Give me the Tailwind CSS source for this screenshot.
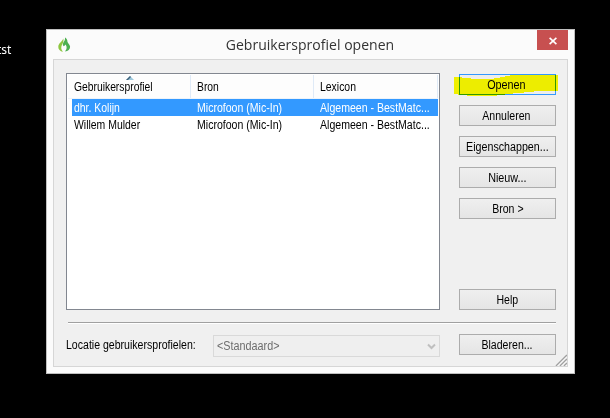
<!DOCTYPE html>
<html lang="nl">
<head>
<meta charset="utf-8">
<title>Gebruikersprofiel openen</title>
<script src="https://cdn.jsdelivr.net/npm/@tailwindcss/browser@4"></script>
</head>
<body class="w-[610px] h-[418px] bg-black overflow-hidden relative text-[12px] leading-[17px] text-black font-['Liberation_Sans',Arial,sans-serif]">
<span class="absolute left-[-3px] top-[41px] text-white text-[12px] font-['Noto_Sans',sans-serif]">tst</span>
<main class="absolute left-[46px] top-[29px] w-[529px] h-[345px] border border-[#bfbfbf] bg-[#fbfbfb] px-[6px] pb-[6px] flex flex-col">
  <header class="h-[29px] shrink-0 flex relative justify-center">
    <svg class="absolute left-[5px] top-[7px]" width="13" height="16" viewBox="0 0 13 16">
      <path d="M5.300 1.500C4.500 4.500.3 6 .3 10c0 2.400 1.700 4.200 4.700 4.800C3.200 12.800 2.800 10.800 3.700 8.600 4.600 6.500 6.100 4.500 5.300 1.500Z" fill="#8dc63f"/>
      <path d="M7 .6C7.600 3.800 4.900 5.200 4.900 7.600c0 .7.300 1.200.8 1.600.8-.2 1.500-.8 1.900-1.700 1.500 2.200 1.500 4.800-.7 7 3.300-.3 5.200-2.200 5.200-4.700C12.100 7 9.200 6.300 9.300 3.400 8.900 2.300 8.200 1.300 7 .6Z" fill="#4caf50"/>
    </svg>
    <h1 class="text-[15px] leading-[29px] text-[#333] whitespace-nowrap font-['Open_Sans','Noto_Sans',sans-serif] relative left-[-1px] scale-x-[.936]">Gebruikersprofiel openen</h1>
    <button class="absolute right-0 top-0 w-[31px] h-[20px] bg-[#c75050] grid place-items-center" aria-label="Sluiten">
      <svg class="relative top-[.5px]" width="8" height="8" viewBox="0 0 8 8"><path d="M.6.8l6.800 6.400M7.400.8L.6 7.200" stroke="#fff" stroke-width="1.600"/></svg>
    </button>
  </header>
  <section class="flex-1 border border-[#d6d6d6] bg-[#f0f0f0] pl-[12px] pr-[11px] pt-[13px] relative">
    <div class="flex justify-between h-[237px]">
      <div class="w-[374px] h-[237px] border border-[#828790] bg-white pl-[5px] pr-px pt-px">
        <div class="h-[24px] -ml-[4px] pl-[4px] grid grid-cols-[119px_123px_124px] border-b border-[#edf3fa] bg-[#fdfdfd] relative">
          <svg class="absolute left-[58px] top-px" width="8" height="4"><path d="M0 4L4 0l4 4Z" fill="#9cc8dc"/><path d="M0 4L4 0l1 1-3 3Z" fill="#3f617a"/></svg>
          <div class="border-r border-[#dfeaf7] pl-[2px] pt-[4px]"><span class="inline-block origin-left scale-x-[.86] whitespace-nowrap">Gebruikersprofiel</span></div>
          <div class="border-r border-[#dfeaf7] pl-[6px] pt-[4px]"><span class="inline-block origin-left scale-x-[.86]">Bron</span></div>
          <div class="border-r border-[#dfeaf7] pl-[6px] pt-[4px]"><span class="inline-block origin-left scale-x-[.87]">Lexicon</span></div>
        </div>
        <div class="h-[17px] pt-px grid grid-cols-[119px_123px_124px] bg-[#3399ff] text-white whitespace-nowrap">
          <div class="pl-[2px]"><span class="inline-block origin-left scale-x-[.87]">dhr. Kolijn</span></div>
          <div class="pl-[6px]"><span class="inline-block origin-left scale-x-[.88]">Microfoon (Mic-In)</span></div>
          <div class="pl-[6px]"><span class="inline-block origin-left scale-x-[.88]">Algemeen - BestMatc...</span></div>
        </div>
        <div class="h-[17px] pt-px grid grid-cols-[119px_123px_124px] whitespace-nowrap">
          <div class="pl-[2px]"><span class="inline-block origin-left scale-x-[.87]">Willem Mulder</span></div>
          <div class="pl-[6px]"><span class="inline-block origin-left scale-x-[.88]">Microfoon (Mic-In)</span></div>
          <div class="pl-[6px]"><span class="inline-block origin-left scale-x-[.88]">Algemeen - BestMatc...</span></div>
        </div>
      </div>
      <div class="w-[97px] pt-px flex flex-col gap-[10px] relative">
        <button class="h-[21px] shrink-0 border border-[#3399ff] bg-[#ededed]"><span class="inline-block scale-x-[.9] relative top-px left-[-1px]">Openen</span></button>
        <button class="h-[21px] shrink-0 border border-[#acacac] bg-linear-to-b from-[#efefef] to-[#e5e5e5]"><span class="inline-block scale-x-[.88] relative top-px left-[-1px]">Annuleren</span></button>
        <button class="h-[21px] shrink-0 border border-[#acacac] bg-linear-to-b from-[#efefef] to-[#e5e5e5]"><span class="inline-block scale-x-[.89] relative top-px">Eigenschappen...</span></button>
        <button class="h-[21px] shrink-0 border border-[#acacac] bg-linear-to-b from-[#efefef] to-[#e5e5e5]"><span class="inline-block scale-x-[.9] relative top-px">Nieuw...</span></button>
        <button class="h-[21px] shrink-0 border border-[#acacac] bg-linear-to-b from-[#efefef] to-[#e5e5e5]"><span class="inline-block scale-x-[.88] relative top-px">Bron &gt;</span></button>
        <button class="h-[21px] shrink-0 mt-auto mb-0 border border-[#acacac] bg-linear-to-b from-[#efefef] to-[#e5e5e5]"><span class="inline-block scale-x-[.88] relative top-px">Help</span></button>
        <svg class="absolute left-[-5px] top-[1px] mix-blend-multiply" width="104" height="23" shape-rendering="crispEdges"><path d="M0 3H8V4H17V5H40V4H46V3H51V2H56V1H104V17H80V18H70V19H59V20H51V21H43V22H13V21H4V20H0Z" fill="#ff0"/></svg>
      </div>
    </div>
    <div class="ml-[2px] mt-[12px] h-[2px] bg-white border-t border-[#a0a0a0]"></div>
    <div class="flex h-[22px] mt-[10px] relative">
      <label class="w-[147px] pt-[3px] whitespace-nowrap"><span class="inline-block origin-left scale-x-[.88]">Locatie gebruikersprofielen:</span></label>
      <div class="w-[227px] h-[22px] mt-px border border-[#d9d9d9] bg-[#efefef] text-[#6d6d6d] pl-[3px] pr-[3px] flex items-center justify-between">
        <span class="inline-block origin-left scale-x-[.9]">&lt;Standaard&gt;</span>
        <svg width="9" height="7" viewBox="0 0 9 7"><path d="M1 1.500l3.500 3.500L8 1.500" fill="none" stroke="#bfbfbf" stroke-width="2"/></svg>
      </div>
      <button class="ml-auto w-[97px] h-[21px] border border-[#acacac] bg-linear-to-b from-[#efefef] to-[#e5e5e5]"><span class="inline-block scale-x-[.88] relative top-px">Bladeren...</span></button>
    </div>
    <svg class="absolute right-0 bottom-0" width="12" height="12"><path d="M1 12L12 1M5 12L12 5M9 12L12 9" stroke="#a0a0a0" stroke-width="1.500"/><path d="M2.500 12L12 2.500M6.500 12L12 6.500M10.500 12l1.500-1.500" stroke="#fff" stroke-width=".8"/></svg>
  </section>
</main>
</body>
</html>
